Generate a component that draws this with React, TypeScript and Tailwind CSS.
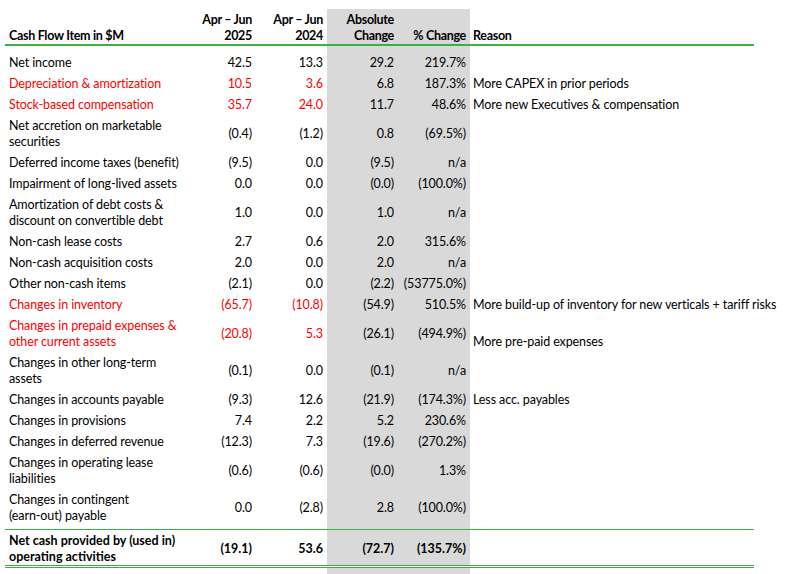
import React from "react";

type Row = {
  label: string[];
  a: string;
  b: string;
  c: string;
  d: string;
  reason?: string;
  red?: boolean;
  reasonBottom?: boolean;
};

const rows: Row[] = [
  { label: ["Net income"], a: "42.5", b: "13.3", c: "29.2", d: "219.7%" },
  { label: ["Depreciation & amortization"], a: "10.5", b: "3.6", c: "6.8", d: "187.3%", reason: "More CAPEX in prior periods", red: true },
  { label: ["Stock-based compensation"], a: "35.7", b: "24.0", c: "11.7", d: "48.6%", reason: "More new Executives & compensation", red: true },
  { label: ["Net accretion on marketable", "securities"], a: "(0.4)", b: "(1.2)", c: "0.8", d: "(69.5%)" },
  { label: ["Deferred income taxes (benefit)"], a: "(9.5)", b: "0.0", c: "(9.5)", d: "n/a" },
  { label: ["Impairment of long-lived assets"], a: "0.0", b: "0.0", c: "(0.0)", d: "(100.0%)" },
  { label: ["Amortization of debt costs &", "discount on convertible debt"], a: "1.0", b: "0.0", c: "1.0", d: "n/a" },
  { label: ["Non-cash lease costs"], a: "2.7", b: "0.6", c: "2.0", d: "315.6%" },
  { label: ["Non-cash acquisition costs"], a: "2.0", b: "0.0", c: "2.0", d: "n/a" },
  { label: ["Other non-cash items"], a: "(2.1)", b: "0.0", c: "(2.2)", d: "(53775.0%)" },
  { label: ["Changes in inventory"], a: "(65.7)", b: "(10.8)", c: "(54.9)", d: "510.5%", reason: "More build-up of inventory for new verticals + tariff risks", red: true },
  { label: ["Changes in prepaid expenses &", "other current assets"], a: "(20.8)", b: "5.3", c: "(26.1)", d: "(494.9%)", reason: "More pre-paid expenses", red: true, reasonBottom: true },
  { label: ["Changes in other long-term", "assets"], a: "(0.1)", b: "0.0", c: "(0.1)", d: "n/a" },
  { label: ["Changes in accounts payable"], a: "(9.3)", b: "12.6", c: "(21.9)", d: "(174.3%)", reason: "Less acc. payables" },
  { label: ["Changes in provisions"], a: "7.4", b: "2.2", c: "5.2", d: "230.6%" },
  { label: ["Changes in deferred revenue"], a: "(12.3)", b: "7.3", c: "(19.6)", d: "(270.2%)" },
  { label: ["Changes in operating lease", "liabilities"], a: "(0.6)", b: "(0.6)", c: "(0.0)", d: "1.3%" },
  { label: ["Changes in contingent", "(earn-out) payable"], a: "0.0", b: "(2.8)", c: "2.8", d: "(100.0%)" },
];

const grid = "grid grid-cols-[180px_71px_71px_71px_72px_284px]";

function DataRow({ r, first, last }: { r: Row; first?: boolean; last?: boolean }) {
  const two = r.label.length > 1;
  const h = two ? "h-[37px]" : "h-[21px]";
  const pt = first ? "pt-[5px]" : "";
  const pb = last ? "pb-[4px]" : "";
  const red = r.red ? "text-[#ff0000]" : "text-black";
  return (
    <div className={grid}>
      <div className={`${pt} ${pb} flex`}>
        <div className={`${h} flex flex-col justify-center pt-[2px] pl-[4px] ${red}`}>
          {r.label.map((l, i) => (
            <span key={i} className="whitespace-nowrap">{l}</span>
          ))}
        </div>
      </div>
      <div className={`${pt} ${pb}`}>
        <div className={`${h} flex items-center justify-end pt-[2px] pr-[4px] ${red}`}>{r.a}</div>
      </div>
      <div className={`${pt} ${pb}`}>
        <div className={`${h} flex items-center justify-end pt-[2px] pr-[4px] ${red}`}>{r.b}</div>
      </div>
      <div className={`${pt} ${pb} bg-[#d9d9d9]`}>
        <div className={`${h} flex items-center justify-end pt-[2px] pr-[4px]`}>{r.c}</div>
      </div>
      <div className={`${pt} ${pb} bg-[#d9d9d9]`}>
        <div className={`${h} flex items-center justify-end pt-[2px] pr-[4px] whitespace-nowrap`}>{r.d}</div>
      </div>
      <div className={`${pt} ${pb}`}>
        <div className={`${h} flex ${r.reasonBottom ? "items-end pb-[1px]" : "items-center pt-[2px]"} pl-[3px] whitespace-nowrap`}>
          {r.reason ?? ""}
        </div>
      </div>
    </div>
  );
}

export default function App() {
  return (
    <div className="min-h-[574px] bg-white pt-[9px] pl-[5px] font-['Lato','Liberation_Sans',sans-serif] text-[12.5px] leading-[16px] tracking-[-0.1px] text-black">
      <div className="w-[749px]">
        {/* Header */}
        <div className={`${grid} font-bold tracking-[-0.3px]`}>
          <div className="h-[35px] flex items-end pl-[4px] whitespace-nowrap">Cash Flow Item in $M</div>
          <div className="h-[35px] flex flex-col items-end justify-end pr-[4px] text-right">
            <span className="whitespace-nowrap">Apr – Jun</span>
            <span>2025</span>
          </div>
          <div className="h-[35px] flex flex-col items-end justify-end pr-[4px] text-right">
            <span className="whitespace-nowrap">Apr – Jun</span>
            <span>2024</span>
          </div>
          <div className="h-[35px] flex flex-col items-end justify-end pr-[4px] text-right bg-[#d9d9d9]">
            <span>Absolute</span>
            <span>Change</span>
          </div>
          <div className="h-[35px] flex items-end justify-end pr-[4px] bg-[#d9d9d9] whitespace-nowrap">% Change</div>
          <div className="h-[35px] flex items-end pl-[3px]">Reason</div>
        </div>
        <div className="h-[2px] bg-[#3fae49]" />

        {rows.map((r, i) => (
          <DataRow key={i} r={r} first={i === 0} last={i === rows.length - 1} />
        ))}

        <div className="h-[1px] bg-[#3fae49]" />
        {/* Total */}
        <div className={`${grid} font-bold tracking-[0px]`}>
          <div className="pt-[3px]">
            <div className="h-[32px] flex flex-col justify-center pl-[4px]">
              <span className="whitespace-nowrap">Net cash provided by (used in)</span>
              <span className="whitespace-nowrap">operating activities</span>
            </div>
          </div>
          <div className="pt-[3px]">
            <div className="h-[32px] flex items-center justify-end pr-[4px]">(19.1)</div>
          </div>
          <div className="pt-[3px]">
            <div className="h-[32px] flex items-center justify-end pr-[4px]">53.6</div>
          </div>
          <div className="pt-[3px] bg-[#d9d9d9]">
            <div className="h-[32px] flex items-center justify-end pr-[4px]">(72.7)</div>
          </div>
          <div className="pt-[3px] bg-[#d9d9d9]">
            <div className="h-[32px] flex items-center justify-end pr-[4px]">(135.7%)</div>
          </div>
          <div className="pt-[3px]">
            <div className="h-[32px]" />
          </div>
        </div>
        <div className="h-[3px] border-y border-[#3fae49] bg-white" />
        <div className={grid}>
          <div className="h-[8px]" />
          <div />
          <div />
          <div className="bg-[#d9d9d9]" />
          <div className="bg-[#d9d9d9]" />
          <div />
        </div>
      </div>
    </div>
  );
}
